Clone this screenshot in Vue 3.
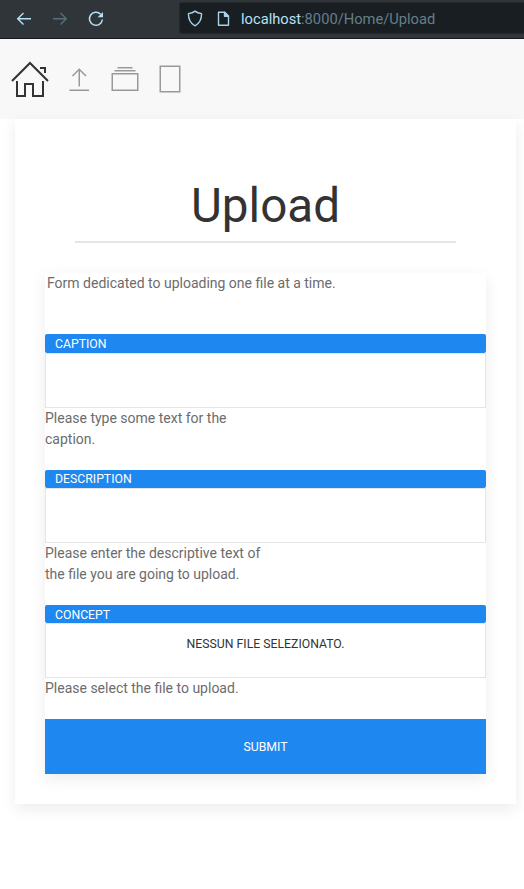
<script setup>
const fields = [
  { label: 'Caption', help: ['Please type some text for the', 'caption.'] },
  { label: 'Description', help: ['Please enter the descriptive text of', 'the file you are going to upload.'] },
  { label: 'Concept', value: 'Nessun file selezionato.', help: ['Please select the file to upload.'] }
]
</script>

<template>
  <div class="page">
    <header class="browser">
      <svg class="controls" width="180" height="38" viewBox="0 0 180 38" fill="none" stroke-width="1.4">
        <path d="M31 18.7H18M23.5 13l-5.8 5.7 5.8 5.7" stroke="#b5e2f8" />
        <path d="M53 18.7h13M60.5 13l5.8 5.7-5.8 5.7" stroke="#586e7a" />
        <path d="M100.6 14.2A6.5 6.5 0 1 0 102.4 19.5" stroke="#b5e2f8" stroke-width="1.5" />
        <path d="M103 12v5.2h-5.4z" fill="#b5e2f8" />
      </svg>
      <div class="address">
        <svg width="56" height="31" viewBox="0 0 56 31" fill="none" stroke="#a8d2e8" stroke-width="1.4" stroke-linejoin="round">
          <path d="M15 8.1C13.2 9.6 11 10.3 8.4 10.6c0 5.8 1.8 9.9 6.6 12.2 4.8-2.3 6.6-6.4 6.6-12.2-2.6-.3-4.8-1-6.6-2.5z" />
          <path d="M38.5 9.2h6.2l3.8 3.8v9.2h-10z" />
          <path d="M44.5 9.2v4h4z" fill="#a8d2e8" />
        </svg>
        <span class="url"><b>localhost</b>:8000/Home/Upload</span>
      </div>
    </header>

    <nav class="nav">
      <svg class="home" width="40" height="40" viewBox="0 0 20 20">
        <polygon points="18.65 11.35 10 2.71 1.35 11.35 .65 10.65 10 1.29 19.35 10.65" />
        <polygon points="15 4 18 4 18 7 17 7 17 5 15 5" />
        <polygon points="3 11 4 11 4 18 7 18 7 12 12 12 12 18 16 18 16 11 17 11 17 19 11 19 11 13 8 13 8 19 3 19" />
      </svg>
      <svg width="30" height="30" viewBox="0 0 20 20">
        <polyline class="line" points="5 8 9.5 3.5 14 8" />
        <rect x="3" y="17" width="13" height="1" />
        <path class="line" d="M9.5 15V4" />
      </svg>
      <svg width="30" height="30" viewBox="0 0 20 20">
        <rect x="5" y="2" width="10" height="1" />
        <rect x="3" y="4" width="14" height="1" />
        <rect class="line" x="1.5" y="6.5" width="17" height="11" />
      </svg>
      <svg width="30" height="30" viewBox="0 0 20 20">
        <rect class="line" x="3.5" y="1.5" width="13" height="17" />
      </svg>
    </nav>

    <main class="card">
      <h1>Upload</h1>
      <form class="form" @submit.prevent>
        <p class="intro">Form dedicated to uploading one file at a time.</p>
        <div v-for="field in fields" :key="field.label" class="field">
          <div class="label">{{ field.label }}</div>
          <div class="input">{{ field.value }}</div>
          <div v-for="line in field.help" :key="line" class="help">{{ line }}</div>
        </div>
        <button class="submit">Submit</button>
      </form>
    </main>
  </div>
</template>

<style>
body {
  background: #fff;
}
</style>

<style scoped>
.page {
  height: 889px;
  overflow: hidden;
  font: 14px/21px Roboto, sans-serif;
  color: #6c6c6c;
}
.browser {
  box-sizing: border-box;
  height: 39px;
  display: flex;
  align-items: flex-start;
  background: #303539;
  border-bottom: 1px solid #15191d;
}
.controls {
  flex: none;
  margin-right: -1px;
}
.address {
  box-sizing: border-box;
  flex: 1;
  height: 32px;
  margin-top: 2px;
  display: flex;
  align-items: center;
  background: #191e22;
  border: 1px solid #24292d;
  border-right: 0;
  border-radius: 3px 0 0 3px;
}
.url {
  margin-left: 5px;
  padding-top: 2px;
  font-size: 14.7px;
  color: #667e8a;
}
.url b {
  font-weight: 400;
  color: #b5e2f8;
}
.nav {
  height: 80px;
  box-sizing: border-box;
  padding-left: 10px;
  display: flex;
  align-items: center;
  gap: 15px;
  background: #f8f8f8;
}
.nav svg {
  fill: #999;
}
.nav .home {
  fill: #333;
}
.nav .line {
  fill: none;
  stroke: #999;
}
.card {
  position: relative;
  box-sizing: border-box;
  width: 501px;
  height: 685px;
  margin-left: 15px;
  padding: 58px 30px 30px;
  background: #fff;
  box-shadow: 0 5px 15px rgba(0, 0, 0, 0.08);
}
h1 {
  margin: 0 30px 30px;
  height: 64px;
  border-bottom: 2px solid #e5e5e5;
  font-size: 47.6px;
  line-height: 59px;
  font-weight: 400;
  text-align: center;
  color: #333;
}
.form {
  height: 501px;
  background: #fff;
  box-shadow: 0 5px 15px rgba(0, 0, 0, 0.08);
}
.intro {
  margin: 0 0 40px;
  padding-left: 2px;
}
.field {
  margin-bottom: 20px;
}
.label {
  height: 18px;
  padding: 0 10px;
  border-radius: 2px;
  background: #1e87f0;
  color: #fff;
  font-size: 12.25px;
  line-height: 18px;
  text-transform: uppercase;
}
.intro + .field .label {
  height: 19px;
  line-height: 20px;
}
.field:nth-of-type(3) .label {
  line-height: 20px;
}
.input {
  box-sizing: border-box;
  height: 55px;
  padding-top: 10px;
  border: 1px solid #e5e5e5;
  font-size: 12.25px;
  line-height: 20px;
  text-align: center;
  text-transform: uppercase;
  color: #333;
}
.submit {
  display: block;
  width: 100%;
  height: 55px;
  padding: 1px 0 0;
  border: 0;
  background: #1e87f0;
  color: #fff;
  font: 12.25px/54px Roboto, sans-serif;
  text-transform: uppercase;
}
</style>
